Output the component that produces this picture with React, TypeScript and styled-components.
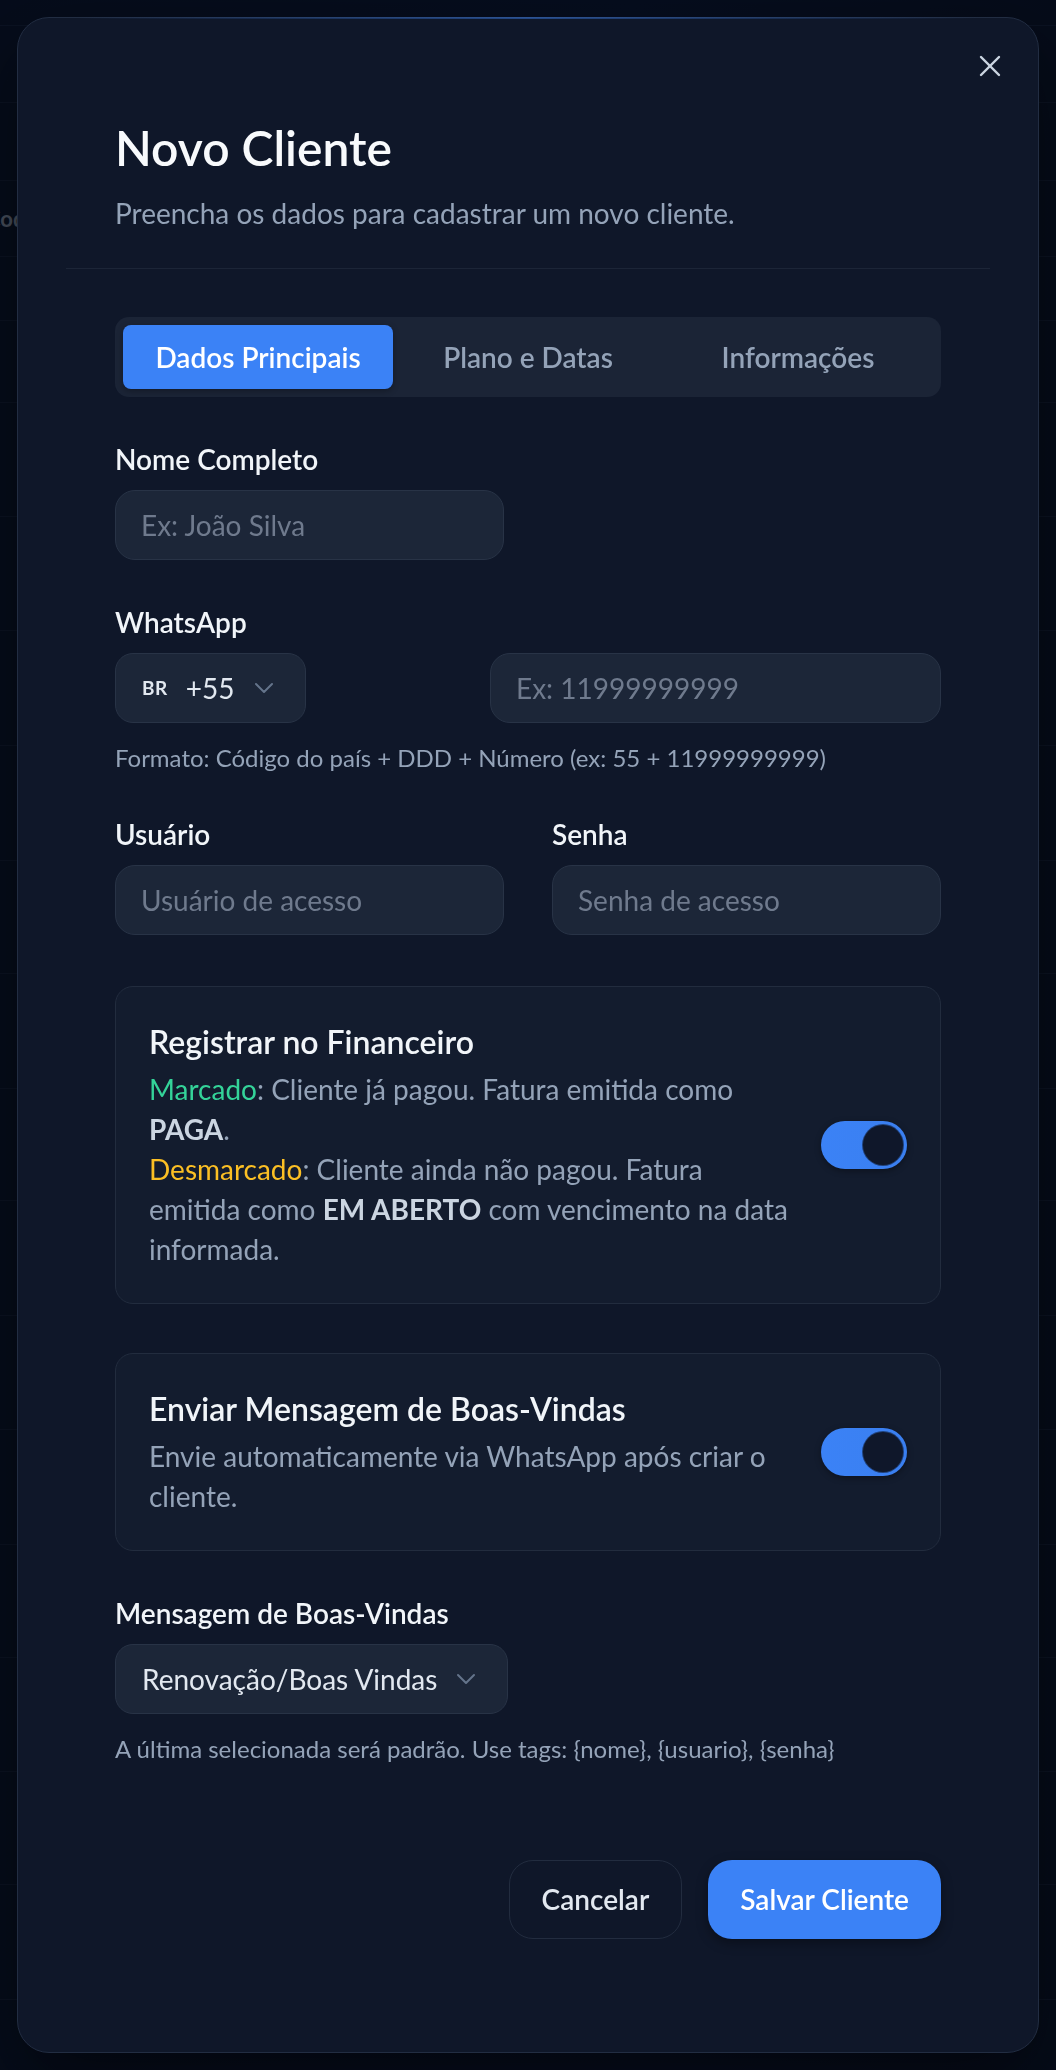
import React, { useState } from 'react'
import styled, { createGlobalStyle } from 'styled-components'
import { X } from 'lucide-react'

const GlobalStyle = createGlobalStyle`
  * { box-sizing: border-box; }
  body {
    margin: 0;
    background: #0a1326;
    font-family: Lato, "Noto Sans", sans-serif;
    color: #f1f5f9;
  }
`

// page behind the dialog
const Backdrop = styled.div`
  height: 2070px;
  overflow: hidden;
  background: linear-gradient(90deg, #0a1429 0%, #0b1630 60%, #0a1326 100%);
`
const BgRow = styled.div<{ $h: number }>`
  height: ${(p) => p.$h}px;
  border-bottom: 1px solid #17223a;
  display: flex;
  align-items: center;
`
const BgCell = styled.span`
  margin-left: -14px;
  font-size: 22px;
  font-weight: 700;
  color: #9aa5b8;
`

const Overlay = styled.div`
  position: fixed;
  inset: 0;
  padding: 17px;
  background: rgba(3, 7, 16, 0.55);
`
const Modal = styled.div`
  position: relative;
  height: 100%;
  padding: 0 48px;
  background: #0f1729;
  border: 1px solid #222d42;
  border-radius: 32px;
  box-shadow: 0 30px 80px rgba(0, 0, 0, 0.5);
  &::before {
    content: '';
    position: absolute;
    top: -1px;
    left: 60px;
    right: 60px;
    height: 2px;
    background: linear-gradient(90deg, transparent, rgba(59, 130, 246, 0.45), transparent);
  }
`
const CloseButton = styled.button`
  position: absolute;
  top: 30px;
  right: 30px;
  width: 36px;
  height: 36px;
  padding: 0;
  border: 0;
  background: none;
  color: #cbd5e1;
  display: flex;
  align-items: center;
  justify-content: center;
`
const Header = styled.div`
  padding: 101px 49px 35px;
  border-bottom: 1px solid #1c2537;
`
const Title = styled.h2`
  margin: 0;
  font-size: 48px;
  line-height: 57.6px;
  font-weight: 600;
  color: #f8fafc;
`
const Subtitle = styled.p`
  margin: 16px 0 0;
  font-size: 28px;
  line-height: 40px;
  color: #94a3b8;
`
const Body = styled.div`
  padding: 48px 49px 0;
`
const Tabs = styled.div`
  display: grid;
  grid-template-columns: repeat(3, 1fr);
  padding: 8px;
  background: #1b2436;
  border-radius: 14px;
`
const Tab = styled.button<{ $active?: boolean }>`
  height: 64px;
  border: 0;
  border-radius: 8px;
  font-family: inherit;
  font-size: 28px;
  font-weight: 600;
  background: ${(p) => (p.$active ? '#3b82f6' : 'transparent')};
  color: ${(p) => (p.$active ? '#ffffff' : '#94a3b8')};
  box-shadow: ${(p) => (p.$active ? '0 2px 6px rgba(0,0,0,0.3)' : 'none')};
`
const Form = styled.div`
  display: flex;
  flex-direction: column;
  gap: 42px;
  margin-top: 42px;
`
const Field = styled.div``
const Grid = styled.div<{ $cols?: string }>`
  display: grid;
  grid-template-columns: ${(p) => p.$cols || '1fr 1fr'};
  column-gap: 48px;
`
const Label = styled.label`
  display: block;
  margin-bottom: 11px;
  font-size: 28px;
  line-height: 40px;
  font-weight: 600;
  color: #f1f5f9;
`
const Input = styled.input`
  width: 100%;
  height: 70px;
  padding: 0 25px;
  font-family: inherit;
  font-size: 28px;
  color: #e2e8f0;
  background: #1c2638;
  border: 1.5px solid #283346;
  border-radius: 20px;
  outline: none;
  &::placeholder {
    color: #6f7a8d;
  }
`
const SelectBox = styled.div<{ $width: number }>`
  width: ${(p) => p.$width}px;
  height: 70px;
  display: flex;
  align-items: center;
  justify-content: space-between;
  padding: 0 31px 0 26px;
  background: #1c2638;
  border: 1.5px solid #283346;
  border-radius: 18px;
  font-size: 28px;
  color: #e2e8f0;
`
const SelectValue = styled.span`
  display: flex;
  align-items: center;
  gap: 18px;
`
const CountryCode = styled.span`
  font-size: 19px;
  font-weight: 700;
  letter-spacing: 0.5px;
  color: #e2e8f0;
`
const Hint = styled.p`
  margin: 21px 0 0;
  font-size: 24px;
  line-height: 28px;
  color: #94a3b8;
`
const Card = styled.div<{ $mt: number }>`
  margin-top: ${(p) => p.$mt}px;
  display: flex;
  align-items: center;
  justify-content: space-between;
  gap: 14px;
  padding: 35px 33px 34px;
  background: #131c2e;
  border: 1px solid #222c3e;
  border-radius: 18px;
`
const CardText = styled.div`
  flex: 1;
  max-width: 648px;
`
const CardTitle = styled.h3`
  margin: 0 0 7px;
  font-size: 32px;
  line-height: 40px;
  font-weight: 600;
  color: #f1f5f9;
`
const CardDesc = styled.p`
  margin: 0;
  font-size: 28px;
  line-height: 40px;
  color: #94a3b8;
`
const Tone = styled.span<{ $color: string }>`
  color: ${(p) => p.$color};
`
const Strong = styled.strong`
  font-weight: 700;
  color: #cbd5e1;
`
const Switch = styled.button<{ $on: boolean }>`
  flex: none;
  width: 86px;
  height: 48px;
  padding: 4px;
  border: 0;
  border-radius: 24px;
  display: flex;
  justify-content: ${(p) => (p.$on ? 'flex-end' : 'flex-start')};
  background: ${(p) => (p.$on ? 'linear-gradient(90deg, #3b82f6, #3a7ff0)' : '#334155')};
  box-shadow: 0 2px 6px rgba(0, 0, 0, 0.35);
`
const Knob = styled.span`
  width: 40px;
  height: 40px;
  border-radius: 50%;
  background: #0f172a;
  box-shadow: 0 0 0 1px rgba(15, 23, 42, 0.6);
`
const Footer = styled.div`
  display: flex;
  justify-content: flex-end;
  gap: 26px;
  padding-top: 97px;
`
const Button = styled.button<{ $primary?: boolean }>`
  height: 79px;
  padding: 0 32px;
  border-radius: 24px;
  font-family: inherit;
  font-size: 28px;
  font-weight: 600;
  color: ${(p) => (p.$primary ? '#ffffff' : '#e2e8f0')};
  background: ${(p) => (p.$primary ? '#3b82f6' : 'transparent')};
  border: ${(p) => (p.$primary ? '0' : '1.5px solid #222c3f')};
  box-shadow: ${(p) => (p.$primary ? '0 4px 12px rgba(0,0,0,0.35)' : 'none')};
`

const Chevron = () => (
  <svg width="20" height="12" viewBox="0 0 20 12" fill="none">
    <path d="M2 2l8 8 8-8" stroke="#64748b" strokeWidth="2" strokeLinecap="round" strokeLinejoin="round" />
  </svg>
)

const bgRows = [26, 77, 78, 76, 64, 82, 114, 114, 115, 115, 113, 115, 112, 115, 114, 115, 113, 114, 113, 115]

const App: React.FC = () => {
  const [financeiro, setFinanceiro] = useState(true)
  const [boasVindas, setBoasVindas] = useState(true)
  return (
    <>
      <GlobalStyle />
      <Backdrop>
        {bgRows.map((h, i) => (
          <BgRow key={i} $h={h}>
            {i === 3 && <BgCell>Cod</BgCell>}
          </BgRow>
        ))}
      </Backdrop>
      <Overlay>
        <Modal>
          <CloseButton aria-label="Fechar">
            <X size={36} strokeWidth={1.6} />
          </CloseButton>
          <Header>
            <Title>Novo Cliente</Title>
            <Subtitle>Preencha os dados para cadastrar um novo cliente.</Subtitle>
          </Header>
          <Body>
            <Tabs>
              <Tab $active>Dados Principais</Tab>
              <Tab>Plano e Datas</Tab>
              <Tab>Informações</Tab>
            </Tabs>
            <Form>
              <Field>
                <Label>Nome Completo</Label>
                <Grid>
                  <Input placeholder="Ex: João Silva" />
                </Grid>
              </Field>
              <Field>
                <Label>WhatsApp</Label>
                <Grid $cols="327px 1fr">
                  <SelectBox $width={191}>
                    <SelectValue>
                      <CountryCode>BR</CountryCode>
                      +55
                    </SelectValue>
                    <Chevron />
                  </SelectBox>
                  <Input placeholder="Ex: 11999999999" />
                </Grid>
                <Hint>Formato: Código do país + DDD + Número (ex: 55 + 11999999999)</Hint>
              </Field>
              <Grid>
                <Field>
                  <Label>Usuário</Label>
                  <Input placeholder="Usuário de acesso" />
                </Field>
                <Field>
                  <Label>Senha</Label>
                  <Input placeholder="Senha de acesso" />
                </Field>
              </Grid>
              <Card $mt={9}>
                <CardText>
                  <CardTitle>Registrar no Financeiro</CardTitle>
                  <CardDesc>
                    <Tone $color="#34d399">Marcado</Tone>: Cliente já pagou. Fatura emitida como{' '}
                    <Strong>PAGA</Strong>.
                    <br />
                    <Tone $color="#fbbf24">Desmarcado</Tone>: Cliente ainda não pagou. Fatura emitida como{' '}
                    <Strong>EM ABERTO</Strong> com vencimento na data informada.
                  </CardDesc>
                </CardText>
                <Switch $on={financeiro} onClick={() => setFinanceiro(!financeiro)}>
                  <Knob />
                </Switch>
              </Card>
              <Card $mt={7}>
                <CardText>
                  <CardTitle>Enviar Mensagem de Boas-Vindas</CardTitle>
                  <CardDesc>Envie automaticamente via WhatsApp após criar o cliente.</CardDesc>
                </CardText>
                <Switch $on={boasVindas} onClick={() => setBoasVindas(!boasVindas)}>
                  <Knob />
                </Switch>
              </Card>
              <Field>
                <Label>Mensagem de Boas-Vindas</Label>
                <SelectBox $width={393}>
                  <span>Renovação/Boas Vindas</span>
                  <Chevron />
                </SelectBox>
                <Hint>A última selecionada será padrão. Use tags: {'{nome}'}, {'{usuario}'}, {'{senha}'}</Hint>
              </Field>
            </Form>
            <Footer>
              <Button>Cancelar</Button>
              <Button $primary>Salvar Cliente</Button>
            </Footer>
          </Body>
        </Modal>
      </Overlay>
    </>
  )
}

export default App
